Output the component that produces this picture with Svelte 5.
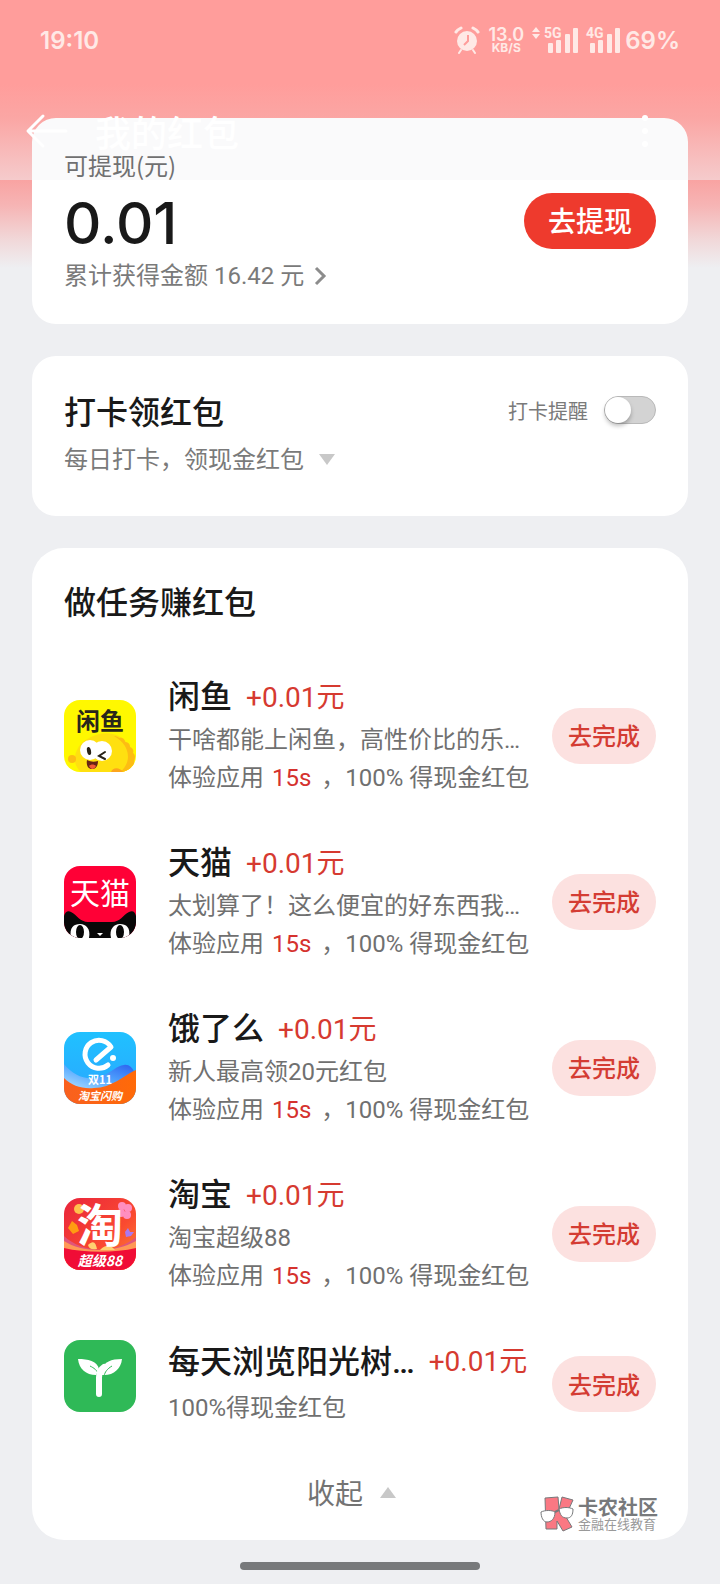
<script>
  let remind = $state(false);

  const tasks = [
    { id: 'xianyu', name: '闲鱼', desc: '干啥都能上闲鱼，高性价比的乐…', trial: true },
    { id: 'tmall', name: '天猫', desc: '太划算了！这么便宜的好东西我…', trial: true },
    { id: 'eleme', name: '饿了么', desc: '新人最高领20元红包', trial: true },
    { id: 'taobao', name: '淘宝', desc: '淘宝超级88', trial: true },
    { id: 'tree', name: '每天浏览阳光树…', desc: '100%得现金红包', trial: false }
  ];

  // Lettering drawn on top of each app tile
  const captions = {
    xianyu: [{ text: '闲鱼', y: 30, size: 24, weight: 700, fill: '#28261b' }],
    tmall: [{ text: '天猫', y: 38, size: 30, weight: 400, fill: '#fff' }],
    eleme: [
      { text: '双11', y: 52, size: 11, weight: 700, fill: '#fff' },
      { text: '淘宝闪购', y: 68, size: 11, weight: 700, fill: '#fff', italic: true }
    ],
    taobao: [
      { text: '淘', y: 44, size: 46, weight: 700, fill: '#fff' },
      { text: '超级88', y: 68, size: 14, weight: 700, fill: '#fff', italic: true }
    ],
    tree: []
  };
</script>

{#snippet signal(label)}
  <svg class="signal" width="34" height="34" viewBox="0 -4 34 34" fill="currentColor">
    <text x="0" y="11" font-size="14" font-weight="700">{label}</text>
    <rect x="4" y="16" width="5" height="10" rx="1" />
    <rect x="12" y="13" width="5" height="13" rx="1" />
    <rect x="21" y="7" width="5" height="19" rx="1" />
    <rect x="29" y="1" width="5" height="25" rx="1" />
  </svg>
{/snippet}

{#snippet appIcon(id)}
  <svg class="app-icon" viewBox="0 0 72 72" aria-hidden="true">
    <clipPath id="tile-{id}"><rect width="72" height="72" rx="16" /></clipPath>
    <g clip-path="url(#tile-{id})">
      {#if id === 'xianyu'}
        <rect width="72" height="72" fill="#fff800" />
        <path d="M17 72C5 62 12 44 25 38c13-8 31-6 38 5 4 2 3 5 4 7 3 2 2 6 2 8 2 4-1 8-3 14z" fill="#ffe010" />
        <path d="M50 36c3 0 4 1 5 2 4-1 6 2 6 4 4 0 5 3 5 5 3 1 4 4 3 6 3 2 2 6 1 8 1 3-1 5-3 6v5H56c11-8 12-26-6-36z" fill="#fdbd13" />
        <circle cx="8" cy="59" r="4" fill="#fdbd13" />
        <path d="M47 72c1-4 8-6 12 0z" fill="#fda51d" />
        <circle cx="26" cy="50" r="10" fill="#fff" />
        <circle cx="38" cy="51" r="10" fill="#fff" />
        <ellipse cx="25" cy="51" rx="2" ry="4" fill="#292318" transform="rotate(-12 25 51)" />
        <path d="M41 52l-6 4 6 3" fill="none" stroke="#292318" stroke-width="2" stroke-linecap="round" />
        <path d="M23 60c4 2 7 2 11 1 0 6-3 8-6 8-4 0-6-4-5-9z" fill="#672315" />
        <path d="M25 66c2-2 5-2 7 0-2 4-5 4-7 0z" fill="#f15a36" />
      {:else if id === 'tmall'}
        <rect width="72" height="72" fill="#ff0036" />
        <path d="M0 50c1-4 4-6 7-4 6 3 9 10 17 10h24c8 0 11-7 17-10 4-2 6 0 7 4v22H0z" fill="#080808" />
        <path d="M7 72C5 61 10 58 16 58s11 5 9 14zM47 72c-2-9 3-14 9-14s11 3 9 14z" fill="#fff" />
        <ellipse cx="16" cy="66" rx="4" ry="7" fill="#080808" />
        <ellipse cx="56" cy="66" rx="4" ry="7" fill="#080808" />
        <path d="M33 67h6l-3 3z" fill="#fff" />
      {:else if id === 'eleme'}
        <defs>
          <linearGradient id="sky" x1="0" y1="0" x2="0" y2="1"><stop stop-color="#20c1ff" /><stop offset="1" stop-color="#2ba4ff" /></linearGradient>
          <linearGradient id="fold" x1="0" y1="1" x2="1" y2="0"><stop stop-color="#b9e4ff" /><stop offset=".5" stop-color="#52a7ff" /><stop offset="1" stop-color="#2a5fee" /></linearGradient>
          <linearGradient id="ember" x1="0" y1="0" x2="1" y2="0"><stop stop-color="#f9601f" /><stop offset="1" stop-color="#ff6a08" /></linearGradient>
        </defs>
        <rect width="72" height="72" fill="url(#sky)" />
        <path d="M0 32c10 12 24 18 38 12 12-5 14-10 22-11 5-1 8 3 10 6L50 58H10C5 54 2 50 0 47z" fill="url(#fold)" />
        <path d="M0 46c8 8 18 11 30 10 18 0 30-13 42-18v34H0z" fill="url(#ember)" />
        <path d="M32 28l15-13A14 14 0 1 0 44 33" fill="none" stroke="#fff" stroke-width="5" stroke-linecap="round" stroke-linejoin="round" />
        <circle cx="49" cy="26" r="3" fill="#fff" />
      {:else if id === 'taobao'}
        <defs>
          <linearGradient id="festival" x1="0" y1="0" x2="1" y2="1"><stop stop-color="#e9243c" /><stop offset=".6" stop-color="#fa4a30" /><stop offset="1" stop-color="#ff8a35" /></linearGradient>
        </defs>
        <rect width="72" height="72" fill="url(#festival)" />
        <path d="M0 38c18 17 51 19 72 1v14H0z" fill="#e0557a" />
        <path d="M0 43c18 12 51 12 72 0v29H0z" fill="#ff9856" />
        <path d="M0 50c21 5 51 5 72 0v22H0z" fill="#f00d36" />
        <circle cx="15" cy="11" r="5" fill="#ffc04c" />
        <path d="M4 30l4-7 5 4 2 6-6 3z" fill="#ff9b12" />
        <g fill="#ff8ec0"><circle cx="58" cy="8" r="4" /><circle cx="64" cy="10" r="4" /><circle cx="63" cy="17" r="4" /><circle cx="57" cy="15" r="4" /></g>
        <path d="M64 30l2 4h4l-3 4-5 1-1-5z" fill="#aa78f0" />
        <path d="M24 47c6-6 8-1 9 4-5 1-8 0-9-4zM36 52c6-6 11-5 15 0z" fill="#ffd071" />
      {:else}
        <rect width="72" height="72" fill="#2fb957" />
        <path d="M14 19c10 0 19 2 21 10l-3 6c-10 0-17-6-18-16z" fill="#fff" />
        <path d="M58 19c-11 0-18 3-20 10v6c11 1 19-6 20-16z" fill="#fff" />
        <path d="M26 26c4 2 7 4 9 9M48 26c-5 3-7 6-8 10" fill="none" stroke="#2fb957" stroke-width="1" />
        <path d="M35 54V38c0-5 2-9 5-11" fill="none" stroke="#fff" stroke-width="6" stroke-linecap="round" />
      {/if}
    </g>
    {#each captions[id] as c (c.text)}
      <text x="36" y={c.y} font-size={c.size} font-weight={c.weight} font-style={c.italic ? 'italic' : 'normal'} text-anchor="middle" fill={c.fill}>{c.text}</text>
    {/each}
  </svg>
{/snippet}

<div class="page">
  <header>
    <div class="status">
      <time>19:10</time>
      <div class="indicators">
        <svg width="26" height="28" viewBox="0 0 26 28" fill="none" stroke="currentColor">
          <circle cx="13" cy="15" r="10" fill="currentColor" stroke="none" />
          <path d="M2 6c1-2 3-3 5-4M24 6c-1-2-3-3-5-4" stroke-width="3" stroke-linecap="round" />
          <path d="M7 24l-2 3M19 24l2 3" stroke-width="2" stroke-linecap="round" />
          <path d="M14 9v6l-4 4" stroke="#ff9d9b" stroke-width="2" />
        </svg>
        <div class="speed"><b>13.0</b><span>KB/S</span></div>
        <svg class="updown" width="8" height="12" viewBox="0 0 8 12" fill="currentColor"><path d="M0 5l4-5 4 5zM0 7h8l-4 5z" /></svg>
        {@render signal('5G')}
        {@render signal('4G')}
        <strong>69%</strong>
      </div>
    </div>
    <div class="appbar">
      <button class="plain" aria-label="返回">
        <svg width="44" height="36" viewBox="0 0 44 36" fill="none" stroke="currentColor" stroke-width="3" stroke-linecap="round" stroke-linejoin="round"><path d="M18 3L3 18l15 15M4 18h37" /></svg>
      </button>
      <h1>我的红包</h1>
      <button class="plain" aria-label="更多">
        <svg width="8" height="34" viewBox="0 0 8 34" fill="currentColor"><circle cx="4" cy="4" r="3" /><circle cx="4" cy="17" r="3" /><circle cx="4" cy="30" r="3" /></svg>
      </button>
    </div>
  </header>

  <main>
    <section class="card balance">
      <div>
        <p class="label">可提现(元)</p>
        <p class="amount">0.01</p>
        <button class="plain total">累计获得金额 16.42 元
          <svg width="14" height="20" viewBox="0 0 14 20" fill="none" stroke="#8c8c8c" stroke-width="3"><path d="M2 2l8 8-8 8" /></svg>
        </button>
      </div>
      <button class="withdraw">去提现</button>
    </section>

    <section class="card checkin">
      <div class="between">
        <h2>打卡领红包</h2>
        <label>打卡提醒<input type="checkbox" role="switch" bind:checked={remind} /></label>
      </div>
      <button class="plain daily">每日打卡，领现金红包
        <svg width="18" height="12" viewBox="0 0 18 12"><path d="M1 0h16L9 11z" fill="#c8c8c8" /></svg>
      </button>
    </section>

    <section class="card tasks">
      <h2>做任务赚红包</h2>
      <ul>
        {#each tasks as task (task.id)}
          <li class:short={!task.trial}>
            {@render appIcon(task.id)}
            <div class="info">
              <h3>{task.name}<em>+0.01元</em></h3>
              <p>{task.desc}</p>
              {#if task.trial}<p>体验应用 <i>15s</i> ，100% 得现金红包</p>{/if}
            </div>
            <button class="go">去完成</button>
          </li>
        {/each}
      </ul>
      <button class="plain collapse">收起
        <svg width="18" height="12" viewBox="0 0 18 12"><path d="M1 12h16L9 1z" fill="#c8c8c8" /></svg>
      </button>
      <div class="brand">
        <svg width="34" height="36" viewBox="0 0 34 36">
          <path d="M5 2l13-1 1 12 3-12 11 3-5 11-2 6 6 10-9 4-6-10v8H6z" fill="#fa7883" stroke="#77797b" />
          <path d="M1 16c4-2 11-2 14 0 0 7-4 10-8 10s-6-5-6-10zM19 13c4-2 10-2 14 0 0 6-2 9-6 9-5 0-7-3-8-9z" fill="#fff" stroke="#77797b" />
          <path d="M15 16l4-2" stroke="#77797b" stroke-width="2" />
        </svg>
        <div><b>卡农社区</b><span>金融在线教育</span></div>
      </div>
    </section>
  </main>
  <div class="homebar"></div>
</div>

<style>
  :global(body) { margin: 0; background: #eeeff2; }
  .page {
    position: relative;
    box-sizing: border-box;
    min-height: 100vh;
    padding: 118px 32px 14px;
    font-family: "Noto Sans CJK SC", sans-serif;
    color: #191919;
    background: linear-gradient(#ff9d9b 0, #ff9d9b 84px, #fba6a4 118px, #f5cbcc 180px, #f9a3a2 180px, #f6b5b5 206px, #f1d8d9 240px, #eeeff2 268px);
  }
  h1, h2, h3, p, ul { margin: 0; padding: 0; }
  button { border: 0; margin: 0; padding: 0; font: inherit; cursor: pointer; }
  svg { display: block; flex: none; }
  .plain { background: none; color: inherit; display: flex; align-items: center; }

  header { position: absolute; z-index: 1; top: 0; left: 0; right: 0; height: 180px; pointer-events: none; color: #fff; }
  header::after { content: ""; position: absolute; z-index: -1; left: 32px; right: 32px; top: 118px; bottom: 0; border-radius: 24px 24px 0 0; background: rgba(20, 20, 40, .02); }
  .status { display: flex; justify-content: space-between; align-items: center; height: 80px; padding: 0 40px; font-family: Inter, sans-serif; color: #ffe9e6; }
  time { font-size: 24px; font-weight: 600; }
  .indicators { display: flex; align-items: center; gap: 8px; }
  .speed { display: flex; flex-direction: column; align-items: center; }
  .speed b { font-size: 18px; line-height: 16px; font-weight: 600; }
  .speed span { font-size: 12px; line-height: 10px; font-weight: 700; }
  .updown { align-self: flex-start; margin: 4px -4px 0 0; }
  .signal { overflow: visible; font-family: Roboto, sans-serif; }
  strong { margin-left: -3px; font-size: 24px; font-weight: 600; }
  .appbar { display: flex; align-items: center; height: 102px; padding: 0 71px 0 25px; }
  h1 { flex: 1; margin-left: 26px; font-size: 36px; line-height: 36px; font-weight: 500; }

  main { display: flex; flex-direction: column; gap: 32px; }
  .card { background: #fff; border-radius: 24px; padding: 32px; }
  h2 { font-size: 32px; line-height: 44px; font-weight: 500; }
  .between, .balance { display: flex; justify-content: space-between; align-items: center; }
  .label { font-size: 24px; line-height: 30px; color: #737373; }
  .amount { margin-top: 6px; font: 500 58px/74px Inter, sans-serif; }
  .total, .daily { font-family: Roboto, "Noto Sans CJK SC", sans-serif; font-size: 24px; color: #7a7a7a; }
  .total { line-height: 32px; gap: 10px; }
  .withdraw, .go { height: 56px; padding-bottom: 2px; border-radius: 28px; font-weight: 500; }
  .withdraw { width: 132px; background: #ee3a2d; color: #fff; font-size: 28px; }
  .go { width: 104px; background: #fce1e0; color: #d43c33; font-size: 24px; }

  .checkin { padding-bottom: 38px; }
  label { display: flex; align-items: center; gap: 16px; font-size: 20px; color: #7a7a7a; }
  input { appearance: none; box-sizing: border-box; width: 52px; height: 28px; margin: 0; border: 1px solid #b9b9b9; border-radius: 14px; background: #d3d3d3; }
  input::before { content: ""; display: block; width: 26px; height: 26px; border-radius: 13px; background: #fff; box-shadow: 0 3px 4px rgba(0, 0, 0, .25); }
  input:checked { background: #ee3a2d; }
  input:checked::before { margin-left: auto; }
  .daily { margin-top: 10px; line-height: 36px; gap: 14px; }

  .tasks { position: relative; border-radius: 32px; padding: 30px 32px 24px; }
  ul { display: flex; flex-direction: column; gap: 43px; margin-top: 52px; list-style: none; }
  li { display: flex; align-items: center; }
  .app-icon { width: 72px; height: 72px; overflow: visible; }
  .info { flex: 1; min-width: 0; margin-left: 32px; white-space: nowrap; font-family: Roboto, "Noto Sans CJK SC", sans-serif; }
  h3 { display: flex; align-items: center; gap: 14px; font-size: 32px; line-height: 47px; font-weight: 500; }
  em { font-style: normal; font-weight: 400; font-size: 28px; color: #d63a30; }
  .info p { font-size: 24px; line-height: 38px; color: #707070; }
  i { margin: 0 4px 0 2px; font-style: normal; color: #d5322e; }
  .short { min-height: 88px; margin-top: 2px; }
  .short .app-icon, .short .info { align-self: flex-start; }
  .short h3 { line-height: 44px; margin-bottom: 5px; }
  .collapse { margin: 40px auto 0; padding-right: 16px; height: 48px; gap: 16px; font-size: 28px; color: #737373; }
  .brand { position: absolute; right: 30px; bottom: 8px; display: flex; align-items: center; gap: 4px; color: #77797b; }
  .brand div { display: flex; flex-direction: column; }
  .brand b { font-size: 20px; line-height: 20px; }
  .brand span { font-size: 13px; line-height: 14px; color: #999; }
  .homebar { width: 240px; height: 8px; margin: 22px auto 0; border-radius: 4px; background: #77797b; }
</style>
